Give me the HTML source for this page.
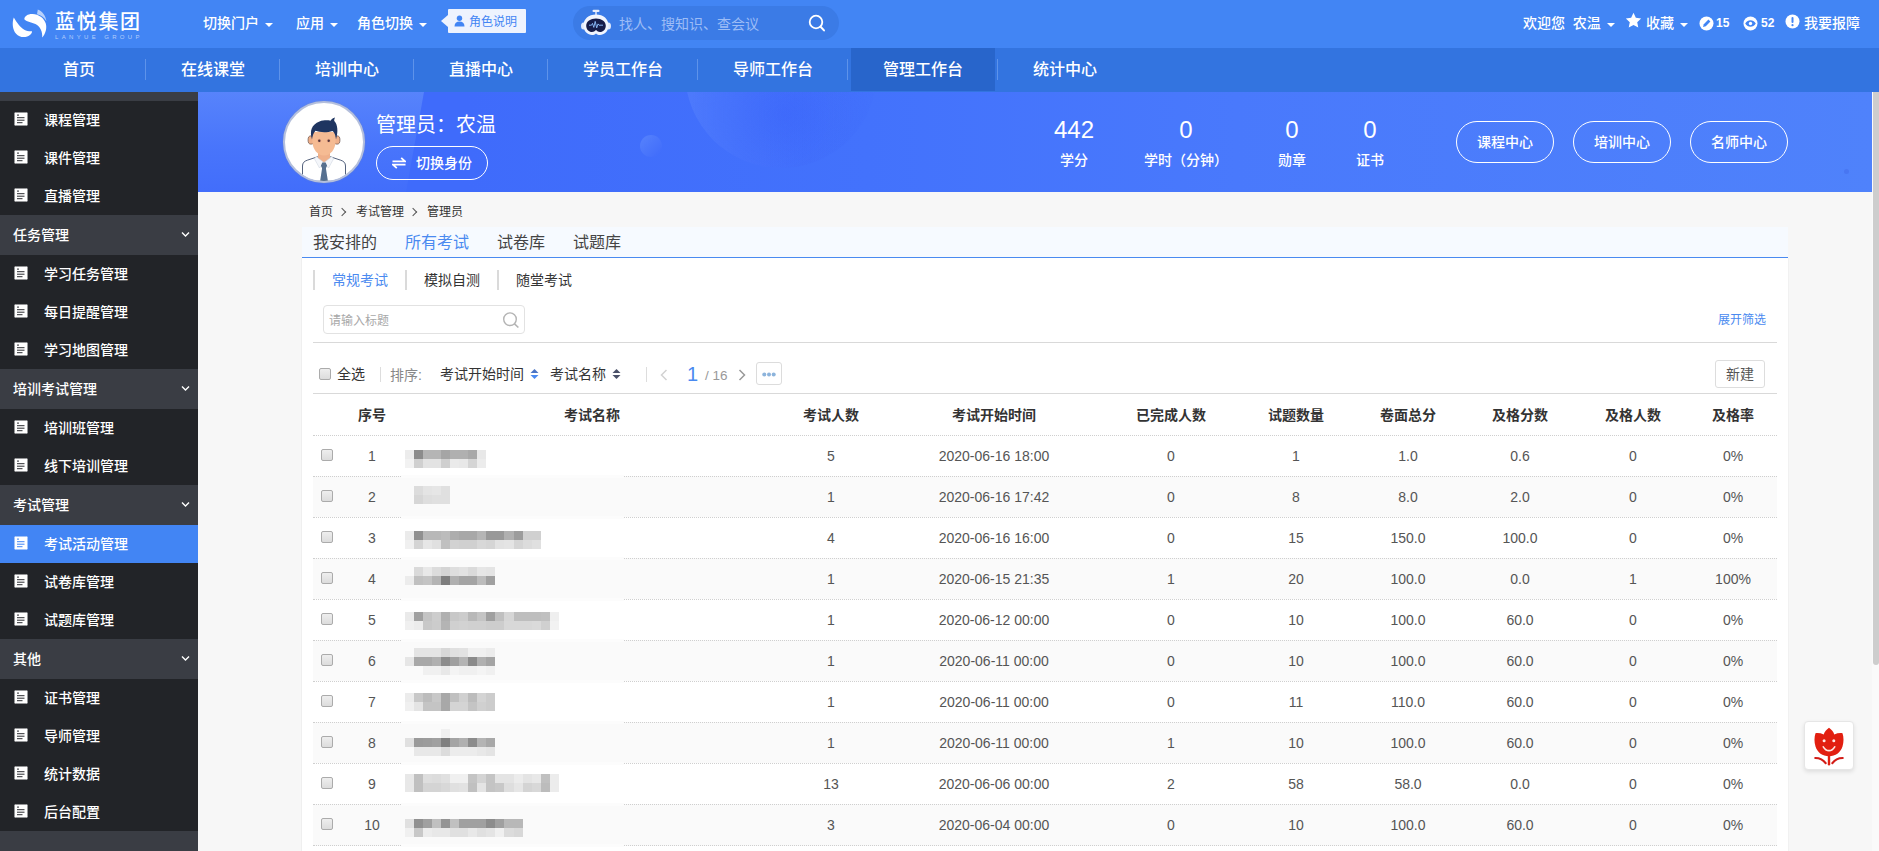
<!DOCTYPE html>
<html lang="zh-CN">
<head>
<meta charset="utf-8">
<title>考试活动管理</title>
<style>
*{box-sizing:border-box;margin:0;padding:0}
html,body{width:1879px;height:851px;overflow:hidden;background:#f7f7f7}
body{font-family:"Liberation Sans","Noto Sans CJK SC",sans-serif;font-size:14px;color:#333;position:relative}
a{text-decoration:none;color:inherit}
.abs{position:absolute}
/* ---------- top bar ---------- */
#top{position:absolute;left:0;top:0;width:1879px;height:48px;background:#4285f4;color:#fff}
#top .t{position:absolute;top:0;height:47px;line-height:47px;font-size:14px;font-weight:500;white-space:nowrap;color:#fff}
.caret{display:inline-block;width:0;height:0;border-left:4px solid transparent;border-right:4px solid transparent;border-top:4px solid #fff;vertical-align:middle;margin-left:6px;margin-top:2px}
/* ---------- nav ---------- */
#nav{position:absolute;left:0;top:48px;width:1879px;height:44px;background:#3374e0;color:#fff}
#nav .n{position:absolute;top:0;height:44px;line-height:44px;font-size:16px;font-weight:500;text-align:center;white-space:nowrap}
#nav .sep{position:absolute;top:11px;width:1px;height:21px;background:#5e93ea}
#nav .act{background:#2865cb}
/* ---------- sidebar ---------- */
#side{position:absolute;left:0;top:92px;width:198px;height:759px;background:#3a3d44;color:#fff;font-weight:500}
#side .it{position:absolute;left:0;width:198px;height:38px;line-height:38px;background:#222428;font-size:14px;padding-left:44px;white-space:nowrap}
#side .gp{position:absolute;left:0;width:198px;height:40px;line-height:40px;background:#3a3d44;font-size:14px;padding-left:13px;white-space:nowrap}
#side .it.on{background:#4285f4}
#side .ic{position:absolute;left:14px;top:11px;width:14px;height:14px;stroke:#2a2c31}
#side .on .ic{stroke:#4285f4}
#side .ch{position:absolute;left:181px;top:16px;width:9px;height:7px}
/* ---------- banner ---------- */
#ban{position:absolute;left:198px;top:92px;width:1674px;height:100px;background:#406cfb;overflow:hidden;color:#fff}
/* ---------- scrollbar ---------- */
#sbt{position:absolute;left:1872px;top:92px;width:7px;height:759px;background:#fafafa}
#sbh{position:absolute;left:1873px;top:92px;width:6px;height:573px;background:#cdcdcd;border-radius:0 0 3px 3px}
/* ---------- content ---------- */
#crumb{position:absolute;left:309px;top:204px;height:16px;line-height:16px;font-size:12px;color:#333;white-space:nowrap}
#tabs{position:absolute;left:302px;top:227px;width:1486px;height:31px;background:#f6faff;border-bottom:1px solid #4a8af0}
#tabs span{position:absolute;top:0;height:30px;line-height:31px;font-size:16px;color:#444;white-space:nowrap}
#panel{position:absolute;left:302px;top:258px;width:1486px;height:593px;background:#fff;box-shadow:-1px 0 0 #efefef,1px 0 0 #f1f1f1}
.st{position:absolute;top:0;height:100px;text-align:center;color:#fff;white-space:nowrap}
.st b{position:absolute;left:0;right:0;top:22px;height:32px;line-height:32px;font-size:24px;font-weight:400}
.st span{position:absolute;left:0;right:0;top:58px;height:20px;line-height:20px;font-size:14px;font-weight:500}
.pill{position:absolute;top:29px;width:98px;height:42px;line-height:40px;border:1px solid #fff;border-radius:21px;text-align:center;font-size:14px;font-weight:500;color:#fff;white-space:nowrap}
.gt{display:inline-block;width:6px;height:6px;border-top:1px solid #555;border-right:1px solid #555;transform:rotate(45deg);margin:0 11px 1px 6px}
.sub{position:absolute;top:12px;height:20px;line-height:20px;border-left:2px solid #dadada;padding-left:17px;font-size:14px;color:#333;white-space:nowrap}
.tx{height:24px;line-height:24px;font-size:14px;white-space:nowrap}
.cb{position:absolute;width:12px;height:12px;border:1px solid #ababab;border-radius:2px;background:linear-gradient(#eee,#dcdcdc)}
.th{position:absolute;top:145px;width:140px;height:24px;line-height:24px;text-align:center;font-size:14px;font-weight:700;color:#333;white-space:nowrap}
.tr{position:absolute;left:11px;width:1464px;height:42px;border-top:1px dotted #cfcfcf;border-bottom:1px dotted #cfcfcf}
.td{position:absolute;top:8px;width:140px;height:24px;line-height:24px;text-align:center;font-size:14px;color:#555;white-space:nowrap}
</style>
</head>
<body>
<div id="top">
<svg class="abs" style="left:10px;top:8px" width="40" height="32" viewBox="10 8 40 32">
<path d="M37.800 9.600c4.600 1.900 7.900 6.200 8.600 11.600-2-3.600-5-6-9.400-7z" fill="#d4e3fd" opacity=".8"/>
<path d="M24.300 19.200c.3-3.200 3.700-5.400 8.200-5.200 6.300.3 11.500 4 13.200 9.300 1.400 4.600.2 10-3.500 14.300.5-6.200-2-11-6.800-13.600-3.600-2-8.300-1.800-11.100-4.800z" fill="#fff"/>
<path d="M13.800 17.400c-1.900 5.400-1.300 12.200 2.300 16.300 3.600 4.100 10 4.700 14.400.8 1-.9 1.500-2 1.500-3.200-5 .4-9.800-2-13.300-6.600-1.800-2.400-3.500-4.900-4.900-7.300z" fill="#fff"/>
</svg>
<div class="abs" style="left:55px;top:8px;height:28px;line-height:28px;font-size:20px;letter-spacing:1.700px;font-weight:500;color:#fff;white-space:nowrap">蓝悦集团</div>
<div class="abs" style="left:55px;top:33px;height:8px;line-height:8px;font-size:6px;letter-spacing:3.350px;color:#b4cdfb;white-space:nowrap">LANYUE GROUP</div>
<div class="t" style="left:203px">切换门户<i class="caret"></i></div>
<div class="t" style="left:296px">应用<i class="caret"></i></div>
<div class="t" style="left:357px">角色切换<i class="caret"></i></div>
<div class="abs" style="left:441px;top:15px;width:0;height:0;border-top:6px solid transparent;border-bottom:6px solid transparent;border-right:7px solid #eef3fe"></div>
<div class="abs" style="left:448px;top:9px;width:78px;height:24px;background:#eef3fe;border-radius:1px"></div>
<svg class="abs" style="left:454px;top:15px" width="11" height="12" viewBox="0 0 11 12"><circle cx="5.500" cy="3.200" r="2.700" fill="#4285f4"/><path d="M0.500 11.500c0-3.200 2-5 5-5s5 1.800 5 5z" fill="#4285f4"/></svg>
<div class="abs" style="left:469px;top:10px;height:24px;line-height:24px;font-size:12px;color:#4285f4;white-space:nowrap">角色说明</div>
<div class="abs" style="left:573px;top:6px;width:266px;height:34px;border-radius:17px;background:#3b7be6"></div>
<svg class="abs" style="left:580px;top:9px" width="32" height="28" viewBox="0 0 32 28">
<rect x="12.500" y=".8" width="7" height="2.200" rx="1.100" fill="#e8eefc"/><rect x="15.300" y="2" width="1.400" height="4" fill="#e8eefc"/>
<ellipse cx="3.600" cy="17" rx="2.600" ry="3.600" fill="#dfe8fc"/><ellipse cx="28.400" cy="17" rx="2.600" ry="3.600" fill="#dfe8fc"/>
<path d="M16 5.500c7.500 0 12.500 4.500 12.500 11 0 6-4.500 9.500-8.500 9.500-1.500 0-2.800-.6-4-1.600-1.200 1-2.500 1.600-4 1.600-4 0-8.500-3.500-8.500-9.500 0-6.500 5-11 12.500-11z" fill="#f1f5fe"/>
<path d="M16 9.500c5.500 0 9.800 3 9.800 7.200 0 3.800-2.800 6.300-5.800 6.300-1.600 0-2.800-.8-4-2-1.200 1.200-2.400 2-4 2-3 0-5.800-2.500-5.800-6.300 0-4.200 4.300-7.200 9.800-7.200z" fill="#161c4a"/>
<path d="M9 16.200h2.500l1-1.800 1.300 4 1.400-6 1.500 6.500 1.300-4 1 1.300H23" fill="none" stroke="#8fc0ff" stroke-width=".9"/>
</svg>
<div class="abs" style="left:619px;top:6px;height:36px;line-height:36px;font-size:14px;color:#9dbdf6;white-space:nowrap">找人、搜知识、查会议</div>
<svg class="abs" style="left:807px;top:13px" width="20" height="20" viewBox="0 0 20 20"><circle cx="9" cy="9" r="6.300" fill="none" stroke="#fff" stroke-width="1.800"/><path d="M13.600 13.800l3.400 3.600" stroke="#fff" stroke-width="2" stroke-linecap="round"/></svg>
<div class="t" style="left:1523px">欢迎您&nbsp; 农温<i class="caret"></i></div>
<svg class="abs" style="left:1625px;top:12px" width="17" height="17" viewBox="0 0 16 16"><path d="M8 .8l2.200 4.700 5 .6-3.700 3.500 1 5.100L8 12.200l-4.500 2.500 1-5.100L.8 6.100l5-.6z" fill="#fff"/></svg>
<div class="t" style="left:1646px">收藏<i class="caret"></i></div>
<svg class="abs" style="left:1699px;top:16px" width="15" height="15" viewBox="0 0 15 15"><circle cx="7.500" cy="7.500" r="7" fill="#fff"/><path d="M4 11l.8-2.800 4.600-4.600 2 2-4.600 4.600z" fill="#4285f4"/></svg>
<div class="t" style="left:1716px;font-size:12px;font-weight:700">15</div>
<svg class="abs" style="left:1743px;top:16px" width="15" height="15" viewBox="0 0 15 15"><circle cx="7.500" cy="7.500" r="7" fill="#fff"/><path d="M2.200 7.500c1.500-2.300 3.200-3.300 5.300-3.300s3.800 1 5.300 3.300c-1.500 2.300-3.200 3.300-5.300 3.300s-3.800-1-5.300-3.300z" fill="#4285f4"/><circle cx="7.500" cy="7.500" r="1.700" fill="#fff"/></svg>
<div class="t" style="left:1761px;font-size:12px;font-weight:700">52</div>
<svg class="abs" style="left:1785px;top:14px" width="15" height="15" viewBox="0 0 15 15"><circle cx="7.500" cy="7.500" r="7" fill="#fff"/><rect x="6.500" y="3" width="2" height="6" rx="1" fill="#4285f4"/><circle cx="7.500" cy="11.200" r="1.100" fill="#4285f4"/></svg>
<div class="t" style="left:1804px;font-size:14px">我要报障</div>
</div>
<div id="nav">
<div class="n" style="left:12px;width:134px">首页</div>
<div class="n" style="left:146px;width:134px">在线课堂</div>
<div class="n" style="left:280px;width:134px">培训中心</div>
<div class="n" style="left:414px;width:134px">直播中心</div>
<div class="n" style="left:548px;width:150px">学员工作台</div>
<div class="n" style="left:698px;width:150px">导师工作台</div>
<div class="abs act" style="left:851px;top:0;width:144px;height:43px"></div>
<div class="n" style="left:848px;width:150px">管理工作台</div>
<div class="n" style="left:998px;width:134px">统计中心</div>
<div class="sep" style="left:145px"></div>
<div class="sep" style="left:279px"></div>
<div class="sep" style="left:413px"></div>
<div class="sep" style="left:547px"></div>
<div class="sep" style="left:697px"></div>
<div class="sep" style="left:847px"></div>
<div class="sep" style="left:997px"></div>
</div>
<div id="side">
<div class="it" style="top:9px"><svg class="ic" viewBox="0 0 14 14"><rect width="14" height="14" rx="1.200" fill="#fff"/><path d="M3 3.100h2M3 5.700h7.500M3 8.200h7.500M3 10.700h5.500" stroke-width="1"/></svg>课程管理</div>
<div class="it" style="top:47px"><svg class="ic" viewBox="0 0 14 14"><rect width="14" height="14" rx="1.200" fill="#fff"/><path d="M3 3.100h2M3 5.700h7.500M3 8.200h7.500M3 10.700h5.500" stroke-width="1"/></svg>课件管理</div>
<div class="it" style="top:85px"><svg class="ic" viewBox="0 0 14 14"><rect width="14" height="14" rx="1.200" fill="#fff"/><path d="M3 3.100h2M3 5.700h7.500M3 8.200h7.500M3 10.700h5.500" stroke-width="1"/></svg>直播管理</div>
<div class="gp" style="top:123px">任务管理<svg class="ch" viewBox="0 0 9 7"><path d="M1 1.500l3.500 3.500 3.500-3.500" fill="none" stroke="#fff" stroke-width="1.400"/></svg></div>
<div class="it" style="top:163px"><svg class="ic" viewBox="0 0 14 14"><rect width="14" height="14" rx="1.200" fill="#fff"/><path d="M3 3.100h2M3 5.700h7.500M3 8.200h7.500M3 10.700h5.500" stroke-width="1"/></svg>学习任务管理</div>
<div class="it" style="top:201px"><svg class="ic" viewBox="0 0 14 14"><rect width="14" height="14" rx="1.200" fill="#fff"/><path d="M3 3.100h2M3 5.700h7.500M3 8.200h7.500M3 10.700h5.500" stroke-width="1"/></svg>每日提醒管理</div>
<div class="it" style="top:239px"><svg class="ic" viewBox="0 0 14 14"><rect width="14" height="14" rx="1.200" fill="#fff"/><path d="M3 3.100h2M3 5.700h7.500M3 8.200h7.500M3 10.700h5.500" stroke-width="1"/></svg>学习地图管理</div>
<div class="gp" style="top:277px">培训考试管理<svg class="ch" viewBox="0 0 9 7"><path d="M1 1.500l3.500 3.500 3.500-3.500" fill="none" stroke="#fff" stroke-width="1.400"/></svg></div>
<div class="it" style="top:317px"><svg class="ic" viewBox="0 0 14 14"><rect width="14" height="14" rx="1.200" fill="#fff"/><path d="M3 3.100h2M3 5.700h7.500M3 8.200h7.500M3 10.700h5.500" stroke-width="1"/></svg>培训班管理</div>
<div class="it" style="top:355px"><svg class="ic" viewBox="0 0 14 14"><rect width="14" height="14" rx="1.200" fill="#fff"/><path d="M3 3.100h2M3 5.700h7.500M3 8.200h7.500M3 10.700h5.500" stroke-width="1"/></svg>线下培训管理</div>
<div class="gp" style="top:393px">考试管理<svg class="ch" viewBox="0 0 9 7"><path d="M1 1.500l3.500 3.500 3.500-3.500" fill="none" stroke="#fff" stroke-width="1.400"/></svg></div>
<div class="it on" style="top:433px"><svg class="ic" viewBox="0 0 14 14"><rect width="14" height="14" rx="1.200" fill="#fff"/><path d="M3 3.100h2M3 5.700h7.500M3 8.200h7.500M3 10.700h5.500" stroke-width="1"/></svg>考试活动管理</div>
<div class="it" style="top:471px"><svg class="ic" viewBox="0 0 14 14"><rect width="14" height="14" rx="1.200" fill="#fff"/><path d="M3 3.100h2M3 5.700h7.500M3 8.200h7.500M3 10.700h5.500" stroke-width="1"/></svg>试卷库管理</div>
<div class="it" style="top:509px"><svg class="ic" viewBox="0 0 14 14"><rect width="14" height="14" rx="1.200" fill="#fff"/><path d="M3 3.100h2M3 5.700h7.500M3 8.200h7.500M3 10.700h5.500" stroke-width="1"/></svg>试题库管理</div>
<div class="gp" style="top:547px">其他<svg class="ch" viewBox="0 0 9 7"><path d="M1 1.500l3.500 3.500 3.500-3.500" fill="none" stroke="#fff" stroke-width="1.400"/></svg></div>
<div class="it" style="top:587px"><svg class="ic" viewBox="0 0 14 14"><rect width="14" height="14" rx="1.200" fill="#fff"/><path d="M3 3.100h2M3 5.700h7.500M3 8.200h7.500M3 10.700h5.500" stroke-width="1"/></svg>证书管理</div>
<div class="it" style="top:625px"><svg class="ic" viewBox="0 0 14 14"><rect width="14" height="14" rx="1.200" fill="#fff"/><path d="M3 3.100h2M3 5.700h7.500M3 8.200h7.500M3 10.700h5.500" stroke-width="1"/></svg>导师管理</div>
<div class="it" style="top:663px"><svg class="ic" viewBox="0 0 14 14"><rect width="14" height="14" rx="1.200" fill="#fff"/><path d="M3 3.100h2M3 5.700h7.500M3 8.200h7.500M3 10.700h5.500" stroke-width="1"/></svg>统计数据</div>
<div class="it" style="top:701px"><svg class="ic" viewBox="0 0 14 14"><rect width="14" height="14" rx="1.200" fill="#fff"/><path d="M3 3.100h2M3 5.700h7.500M3 8.200h7.500M3 10.700h5.500" stroke-width="1"/></svg>后台配置</div>
</div>
<div id="ban">
<div class="abs" style="left:0;top:0;width:1674px;height:100px;background:linear-gradient(90deg,#3f6bfb 0,#3f6bfb 16%,#4372fc 40%,#4979fc 62%,#4f82fb 100%)"></div>
<div class="abs" style="left:0;top:0;width:226px;height:100px;background:linear-gradient(180deg,rgba(120,165,252,.42) 0,rgba(100,145,252,.26) 55%,rgba(90,130,250,.10) 100%);clip-path:polygon(0 0,226px 0,208px 100px,0 100px)"></div>
<div class="abs" style="left:487px;top:-116px;width:192px;height:192px;border-radius:50%;background:radial-gradient(circle at 52% 72%,rgba(56,96,250,.45) 0,rgba(60,100,250,.22) 28%,rgba(70,110,250,0) 55%),linear-gradient(90deg,rgba(120,160,255,.22) 0,rgba(110,150,255,.13) 30%,rgba(90,130,252,.04) 62%,rgba(80,120,250,0) 85%)"></div>
<div class="abs" style="left:442px;top:43px;width:22px;height:22px;border-radius:50%;background:linear-gradient(135deg,#5480fc 10%,#426efb 85%)"></div>
<div class="abs" style="left:85px;top:9px;width:82px;height:82px;border-radius:50%;background:#fff;border:2px solid #b4bfdc;overflow:hidden;box-shadow:0 0 2px rgba(120,140,190,.6)">
<svg width="78" height="78" viewBox="0 0 78 78" style="position:absolute;left:0;top:0">
<path d="M17.500 78V63c0-3.200 1.800-4.800 4.800-5.800l10.200-3.400h13l10.200 3.400c3 1 4.800 2.600 4.800 5.800V78z" fill="#fff" stroke="#41506e" stroke-width=".9"/>
<path d="M33 48h12v9l-6 5-6-5z" fill="#efb08a"/>
<path d="M31 53.500l8 6-4.500 5.500-5-9zM47 53.500l-8 6 4.500 5.500 5-9z" fill="#f4f6fa" stroke="#c9d0dd" stroke-width=".5"/>
<path d="M37.300 59.500h3.400l1.400 3.200-1.200 2.600 2 12.700h-7.800l2-12.700-1.200-2.600z" fill="#56708f"/>
<ellipse cx="26" cy="37" rx="3" ry="4.200" fill="#efb08a" stroke="#3a2a2a" stroke-width=".5"/><ellipse cx="52" cy="37" rx="3" ry="4.200" fill="#efb08a" stroke="#3a2a2a" stroke-width=".5"/>
<path d="M27.500 30c0-2 23-2 23 0v9c0 7-5 13.500-11.500 13.500S27.500 46 27.500 39z" fill="#f5bb93"/>
<path d="M27 36.500c-2.600-8.500-.5-15 7.500-18 4-1.500 8.500-1.300 11-.8.800-1.300 2.400-2.800 4.600-3.300-.8 1.300-1 2.500-.8 3.600 3.500 3.800 4 10.500 1.700 18.500-.4-4.500-1.500-7-3.500-8.500-5.500 1.800-12.500 1.500-17-.2-2 2-3 5-3.500 8.700z" fill="#1f3560"/>
<circle cx="34.300" cy="37.800" r="1.200" fill="#2a1d2a"/><circle cx="43.700" cy="37.800" r="1.200" fill="#2a1d2a"/>
<circle cx="34.300" cy="37.800" r="2" fill="#d97b6a" opacity=".25"/><circle cx="43.700" cy="37.800" r="2" fill="#d97b6a" opacity=".25"/>
</svg></div>
<div class="abs" style="left:178px;top:18px;height:30px;line-height:30px;font-size:20px;font-weight:400;color:#fff;white-space:nowrap">管理员：农温</div>
<div class="abs" style="left:178px;top:54px;width:112px;height:34px;border:1px solid #fff;border-radius:17px"></div>
<svg class="abs" style="left:194px;top:65px" width="14" height="12" viewBox="0 0 14 12"><path d="M.5 4.300h12.500L9.200 .8M13.500 7.700H1L4.800 11.200" fill="none" stroke="#fff" stroke-width="1.800"/></svg>
<div class="abs" style="left:218px;top:54px;height:34px;line-height:34px;font-size:14px;font-weight:500;color:#fff;white-space:nowrap">切换身份</div>
<div class="st" style="left:826px;width:100px"><b>442</b><span>学分</span></div>
<div class="st" style="left:928px;width:120px"><b>0</b><span>学时（分钟）</span></div>
<div class="st" style="left:1044px;width:100px"><b>0</b><span>勋章</span></div>
<div class="st" style="left:1122px;width:100px"><b>0</b><span>证书</span></div>
<div class="pill" style="left:1258px">课程中心</div>
<div class="pill" style="left:1375px">培训中心</div>
<div class="pill" style="left:1492px">名师中心</div>
<div class="abs" style="left:1646px;top:77px;width:5px;height:5px;border-radius:50%;background:#4876f2"></div>
</div>
<div id="sbt"></div><div id="sbh"></div>
<div id="crumb">首页<i class="gt"></i>考试管理<i class="gt"></i>管理员</div>
<div id="tabs"><span style="left:11px">我安排的</span><span style="left:103px;color:#4a8af0">所有考试</span><span style="left:195px">试卷库</span><span style="left:271px">试题库</span></div>
<div id="panel">
<div class="sub" style="left:11px;color:#4a8af0">常规考试</div><div class="sub" style="left:103px">模拟自测</div><div class="sub" style="left:195px">随堂考试</div>
<div class="abs" style="left:21px;top:47px;width:202px;height:29px;border:1px solid #e2e2e2;border-radius:4px;background:#fff"></div>
<div class="abs" style="left:27px;top:48px;height:28px;line-height:30px;font-size:12px;color:#a8a8a8;white-space:nowrap">请输入标题</div>
<svg class="abs" style="left:199px;top:52px" width="20" height="20" viewBox="0 0 20 20"><circle cx="9" cy="9.200" r="6.300" fill="none" stroke="#b4b4b4" stroke-width="1.400"/><path d="M13.500 13.800l3.900 3.700" stroke="#b4b4b4" stroke-width="1.600"/></svg>
<div class="abs" style="left:1416px;top:53px;height:18px;line-height:18px;font-size:12px;color:#4a8af0;white-space:nowrap">展开筛选</div>
<div class="abs" style="left:11px;top:84px;width:1464px;height:1px;background:#d9d9d9"></div>
<div class="cb" style="left:17px;top:110px"></div>
<div class="abs tx" style="left:35px;top:104px;color:#333">全选</div>
<div class="abs" style="left:78px;top:109px;width:1px;height:15px;background:#ddd"></div>
<div class="abs tx" style="left:88px;top:105px;color:#888">排序:</div>
<div class="abs tx" style="left:138px;top:104px;color:#333">考试开始时间</div>
<svg class="abs" style="left:228px;top:111px" width="9" height="10" viewBox="0 0 9 10"><path d="M4.500 0L8.500 4H.5z" fill="#4a74c4"/><path d="M4.500 10L8.500 6H.5z" fill="#4a8af0"/></svg>
<div class="abs tx" style="left:248px;top:104px;color:#333">考试名称</div>
<svg class="abs" style="left:310px;top:111px" width="9" height="10" viewBox="0 0 9 10"><path d="M4.500 0L8.500 4H.5zM4.500 10L8.500 6H.5z" fill="#4a5068"/></svg>
<div class="abs" style="left:344px;top:109px;width:1px;height:15px;background:#ddd"></div>
<svg class="abs" style="left:358px;top:111px" width="8" height="12" viewBox="0 0 8 12"><path d="M6.500 1L1.500 6l5 5" fill="none" stroke="#d2d2d2" stroke-width="1.500"/></svg>
<div class="abs" style="left:385px;top:102px;height:28px;line-height:28px;font-size:20px;color:#4a8af0">1</div>
<div class="abs tx" style="left:403px;top:106px;color:#999;font-size:13.500px">/ 16</div>
<svg class="abs" style="left:436px;top:111px" width="8" height="12" viewBox="0 0 8 12"><path d="M1.500 1l5 5-5 5" fill="none" stroke="#999" stroke-width="1.500"/></svg>
<div class="abs" style="left:454px;top:104px;width:26px;height:23px;border:1px solid #dcdcdc;border-radius:3px;background:#fff"></div>
<svg class="abs" style="left:460px;top:114px" width="14" height="5" viewBox="0 0 14 5"><circle cx="2.300" cy="2.500" r="2" fill="#8db4dc"/><circle cx="7" cy="2.500" r="2" fill="#8db4dc"/><circle cx="11.700" cy="2.500" r="2" fill="#8db4dc"/></svg>
<div class="abs" style="left:1413px;top:102px;width:50px;height:28px;line-height:27px;border:1px solid #ddd;border-radius:3px;background:#fff;text-align:center;font-size:14px;color:#555">新建</div>
<div class="abs" style="left:11px;top:135px;width:1464px;height:1px;background:#d9d9d9"></div>
<div class="th" style="left:0px">序号</div><div class="th" style="left:220px">考试名称</div><div class="th" style="left:459px">考试人数</div><div class="th" style="left:622px">考试开始时间</div><div class="th" style="left:799px">已完成人数</div><div class="th" style="left:924px">试题数量</div><div class="th" style="left:1036px">卷面总分</div><div class="th" style="left:1148px">及格分数</div><div class="th" style="left:1261px">及格人数</div><div class="th" style="left:1361px">及格率</div>
<div class="tr" style="top:177px;background:#fff"><div class="cb" style="left:8px;top:13px"></div><div class="td" style="left:-11px">1</div><div class="td" style="left:448px">5</div><div class="td" style="left:611px">2020-06-16 18:00</div><div class="td" style="left:788px">0</div><div class="td" style="left:913px">1</div><div class="td" style="left:1025px">1.0</div><div class="td" style="left:1137px">0.6</div><div class="td" style="left:1250px">0</div><div class="td" style="left:1350px">0%</div></div>
<div class="tr" style="top:218px;background:#fafafa"><div class="cb" style="left:8px;top:13px"></div><div class="td" style="left:-11px">2</div><div class="td" style="left:448px">1</div><div class="td" style="left:611px">2020-06-16 17:42</div><div class="td" style="left:788px">0</div><div class="td" style="left:913px">8</div><div class="td" style="left:1025px">8.0</div><div class="td" style="left:1137px">2.0</div><div class="td" style="left:1250px">0</div><div class="td" style="left:1350px">0%</div></div>
<div class="tr" style="top:259px;background:#fff"><div class="cb" style="left:8px;top:13px"></div><div class="td" style="left:-11px">3</div><div class="td" style="left:448px">4</div><div class="td" style="left:611px">2020-06-16 16:00</div><div class="td" style="left:788px">0</div><div class="td" style="left:913px">15</div><div class="td" style="left:1025px">150.0</div><div class="td" style="left:1137px">100.0</div><div class="td" style="left:1250px">0</div><div class="td" style="left:1350px">0%</div></div>
<div class="tr" style="top:300px;background:#fafafa"><div class="cb" style="left:8px;top:13px"></div><div class="td" style="left:-11px">4</div><div class="td" style="left:448px">1</div><div class="td" style="left:611px">2020-06-15 21:35</div><div class="td" style="left:788px">1</div><div class="td" style="left:913px">20</div><div class="td" style="left:1025px">100.0</div><div class="td" style="left:1137px">0.0</div><div class="td" style="left:1250px">1</div><div class="td" style="left:1350px">100%</div></div>
<div class="tr" style="top:341px;background:#fff"><div class="cb" style="left:8px;top:13px"></div><div class="td" style="left:-11px">5</div><div class="td" style="left:448px">1</div><div class="td" style="left:611px">2020-06-12 00:00</div><div class="td" style="left:788px">0</div><div class="td" style="left:913px">10</div><div class="td" style="left:1025px">100.0</div><div class="td" style="left:1137px">60.0</div><div class="td" style="left:1250px">0</div><div class="td" style="left:1350px">0%</div></div>
<div class="tr" style="top:382px;background:#fafafa"><div class="cb" style="left:8px;top:13px"></div><div class="td" style="left:-11px">6</div><div class="td" style="left:448px">1</div><div class="td" style="left:611px">2020-06-11 00:00</div><div class="td" style="left:788px">0</div><div class="td" style="left:913px">10</div><div class="td" style="left:1025px">100.0</div><div class="td" style="left:1137px">60.0</div><div class="td" style="left:1250px">0</div><div class="td" style="left:1350px">0%</div></div>
<div class="tr" style="top:423px;background:#fff"><div class="cb" style="left:8px;top:13px"></div><div class="td" style="left:-11px">7</div><div class="td" style="left:448px">1</div><div class="td" style="left:611px">2020-06-11 00:00</div><div class="td" style="left:788px">0</div><div class="td" style="left:913px">11</div><div class="td" style="left:1025px">110.0</div><div class="td" style="left:1137px">60.0</div><div class="td" style="left:1250px">0</div><div class="td" style="left:1350px">0%</div></div>
<div class="tr" style="top:464px;background:#fafafa"><div class="cb" style="left:8px;top:13px"></div><div class="td" style="left:-11px">8</div><div class="td" style="left:448px">1</div><div class="td" style="left:611px">2020-06-11 00:00</div><div class="td" style="left:788px">1</div><div class="td" style="left:913px">10</div><div class="td" style="left:1025px">100.0</div><div class="td" style="left:1137px">60.0</div><div class="td" style="left:1250px">0</div><div class="td" style="left:1350px">0%</div></div>
<div class="tr" style="top:505px;background:#fff"><div class="cb" style="left:8px;top:13px"></div><div class="td" style="left:-11px">9</div><div class="td" style="left:448px">13</div><div class="td" style="left:611px">2020-06-06 00:00</div><div class="td" style="left:788px">2</div><div class="td" style="left:913px">58</div><div class="td" style="left:1025px">58.0</div><div class="td" style="left:1137px">0.0</div><div class="td" style="left:1250px">0</div><div class="td" style="left:1350px">0%</div></div>
<div class="tr" style="top:546px;background:#fafafa"><div class="cb" style="left:8px;top:13px"></div><div class="td" style="left:-11px">10</div><div class="td" style="left:448px">3</div><div class="td" style="left:611px">2020-06-04 00:00</div><div class="td" style="left:788px">0</div><div class="td" style="left:913px">10</div><div class="td" style="left:1025px">100.0</div><div class="td" style="left:1137px">60.0</div><div class="td" style="left:1250px">0</div><div class="td" style="left:1350px">0%</div></div>
</div>
<!--MOSAIC--><svg class="abs" style="left:401px;top:436px" width="223" height="415" viewBox="0 0 223 415" shape-rendering="crispEdges">
<rect x="0" y="39" width="223" height="3" fill="#fcfcfc"/>
<rect x="0" y="80" width="223" height="3" fill="#fcfcfc"/>
<rect x="0" y="121" width="223" height="3" fill="#fcfcfc"/>
<rect x="0" y="162" width="223" height="3" fill="#fcfcfc"/>
<rect x="0" y="203" width="223" height="3" fill="#fcfcfc"/>
<rect x="0" y="244" width="223" height="3" fill="#fcfcfc"/>
<rect x="0" y="285" width="223" height="3" fill="#fcfcfc"/>
<rect x="0" y="326" width="223" height="3" fill="#fcfcfc"/>
<rect x="0" y="367" width="223" height="3" fill="#fcfcfc"/>
<rect x="0" y="408" width="223" height="3" fill="#fcfcfc"/>
<rect x="3.90" y="13.90" width="9.05" height="9.05" fill="#ececec"/>
<rect x="12.95" y="13.90" width="9.05" height="9.05" fill="#8c8c8c"/>
<rect x="22.00" y="13.90" width="9.05" height="9.05" fill="#b5b5b5"/>
<rect x="31.05" y="13.90" width="9.05" height="9.05" fill="#b5b5b5"/>
<rect x="40.10" y="13.90" width="9.05" height="9.05" fill="#a5a5a5"/>
<rect x="49.15" y="13.90" width="9.05" height="9.05" fill="#b0b0b0"/>
<rect x="58.20" y="13.90" width="9.05" height="9.05" fill="#b0b0b0"/>
<rect x="67.25" y="13.90" width="9.05" height="9.05" fill="#a8a8a8"/>
<rect x="76.30" y="13.90" width="9.05" height="9.05" fill="#e8e8e8"/>
<rect x="3.90" y="23.00" width="9.05" height="9.05" fill="#f2f2f2"/>
<rect x="12.95" y="23.00" width="9.05" height="9.05" fill="#d0d0d0"/>
<rect x="22.00" y="23.00" width="9.05" height="9.05" fill="#e3e3e3"/>
<rect x="31.05" y="23.00" width="9.05" height="9.05" fill="#e3e3e3"/>
<rect x="40.10" y="23.00" width="9.05" height="9.05" fill="#cfcfcf"/>
<rect x="49.15" y="23.00" width="9.05" height="9.05" fill="#eaeaea"/>
<rect x="58.20" y="23.00" width="9.05" height="9.05" fill="#e8e8e8"/>
<rect x="67.25" y="23.00" width="9.05" height="9.05" fill="#d5d5d5"/>
<rect x="76.30" y="23.00" width="9.05" height="9.05" fill="#ececec"/>
<rect x="12.95" y="49.70" width="9.05" height="9.05" fill="#dcdcdc"/>
<rect x="22.00" y="49.70" width="9.05" height="9.05" fill="#e4e4e4"/>
<rect x="31.05" y="49.70" width="9.05" height="9.05" fill="#e6e6e6"/>
<rect x="40.10" y="49.70" width="9.05" height="9.05" fill="#e0e0e0"/>
<rect x="12.95" y="58.80" width="9.05" height="9.05" fill="#d6d6d6"/>
<rect x="22.00" y="58.80" width="9.05" height="9.05" fill="#dedede"/>
<rect x="31.05" y="58.80" width="9.05" height="9.05" fill="#e0e0e0"/>
<rect x="40.10" y="58.80" width="9.05" height="9.05" fill="#e0e0e0"/>
<rect x="3.90" y="94.90" width="9.05" height="9.05" fill="#ebebeb"/>
<rect x="12.95" y="94.90" width="9.05" height="9.05" fill="#909090"/>
<rect x="22.00" y="94.90" width="9.05" height="9.05" fill="#b8b8b8"/>
<rect x="31.05" y="94.90" width="9.05" height="9.05" fill="#b8b8b8"/>
<rect x="40.10" y="94.90" width="9.05" height="9.05" fill="#bcbcbc"/>
<rect x="49.15" y="94.90" width="9.05" height="9.05" fill="#adadad"/>
<rect x="58.20" y="94.90" width="9.05" height="9.05" fill="#a8a8a8"/>
<rect x="67.25" y="94.90" width="9.05" height="9.05" fill="#a8a8a8"/>
<rect x="76.30" y="94.90" width="9.05" height="9.05" fill="#b5b5b5"/>
<rect x="85.35" y="94.90" width="9.05" height="9.05" fill="#999999"/>
<rect x="94.40" y="94.90" width="9.05" height="9.05" fill="#999999"/>
<rect x="103.45" y="94.90" width="9.05" height="9.05" fill="#b0b0b0"/>
<rect x="112.50" y="94.90" width="9.05" height="9.05" fill="#9c9c9c"/>
<rect x="121.55" y="94.90" width="9.05" height="9.05" fill="#d0d0d0"/>
<rect x="130.60" y="94.90" width="9.05" height="9.05" fill="#d0d0d0"/>
<rect x="3.90" y="104.00" width="9.05" height="9.05" fill="#f0f0f0"/>
<rect x="12.95" y="104.00" width="9.05" height="9.05" fill="#d4d4d4"/>
<rect x="22.00" y="104.00" width="9.05" height="9.05" fill="#e6e6e6"/>
<rect x="31.05" y="104.00" width="9.05" height="9.05" fill="#e0e0e0"/>
<rect x="40.10" y="104.00" width="9.05" height="9.05" fill="#c0c0c0"/>
<rect x="49.15" y="104.00" width="9.05" height="9.05" fill="#d2d2d2"/>
<rect x="58.20" y="104.00" width="9.05" height="9.05" fill="#d0d0d0"/>
<rect x="67.25" y="104.00" width="9.05" height="9.05" fill="#d0d0d0"/>
<rect x="76.30" y="104.00" width="9.05" height="9.05" fill="#d8d8d8"/>
<rect x="85.35" y="104.00" width="9.05" height="9.05" fill="#d5d5d5"/>
<rect x="94.40" y="104.00" width="9.05" height="9.05" fill="#e2e2e2"/>
<rect x="103.45" y="104.00" width="9.05" height="9.05" fill="#e4e4e4"/>
<rect x="112.50" y="104.00" width="9.05" height="9.05" fill="#d5d5d5"/>
<rect x="121.55" y="104.00" width="9.05" height="9.05" fill="#dcdcdc"/>
<rect x="130.60" y="104.00" width="9.05" height="9.05" fill="#e0e0e0"/>
<rect x="12.95" y="131.10" width="9.05" height="9.05" fill="#dadada"/>
<rect x="22.00" y="131.10" width="9.05" height="9.05" fill="#e8e8e8"/>
<rect x="31.05" y="131.10" width="9.05" height="9.05" fill="#dcdcdc"/>
<rect x="40.10" y="131.10" width="9.05" height="9.05" fill="#d4d4d4"/>
<rect x="49.15" y="131.10" width="9.05" height="9.05" fill="#dedede"/>
<rect x="58.20" y="131.10" width="9.05" height="9.05" fill="#e2e2e2"/>
<rect x="67.25" y="131.10" width="9.05" height="9.05" fill="#dadada"/>
<rect x="76.30" y="131.10" width="9.05" height="9.05" fill="#e6e6e6"/>
<rect x="85.35" y="131.10" width="9.05" height="9.05" fill="#e4e4e4"/>
<rect x="3.90" y="140.10" width="9.05" height="9.05" fill="#ececec"/>
<rect x="12.95" y="140.10" width="9.05" height="9.05" fill="#c0c0c0"/>
<rect x="22.00" y="140.10" width="9.05" height="9.05" fill="#c4c4c4"/>
<rect x="31.05" y="140.10" width="9.05" height="9.05" fill="#b4b4b4"/>
<rect x="40.10" y="140.10" width="9.05" height="9.05" fill="#7e7e7e"/>
<rect x="49.15" y="140.10" width="9.05" height="9.05" fill="#b0b0b0"/>
<rect x="58.20" y="140.10" width="9.05" height="9.05" fill="#a4a4a4"/>
<rect x="67.25" y="140.10" width="9.05" height="9.05" fill="#a4a4a4"/>
<rect x="76.30" y="140.10" width="9.05" height="9.05" fill="#bcbcbc"/>
<rect x="85.35" y="140.10" width="9.05" height="9.05" fill="#a0a0a0"/>
<rect x="3.90" y="176.30" width="9.05" height="9.05" fill="#eaeaea"/>
<rect x="12.95" y="176.30" width="9.05" height="9.05" fill="#a0a0a0"/>
<rect x="22.00" y="176.30" width="9.05" height="9.05" fill="#c4c4c4"/>
<rect x="31.05" y="176.30" width="9.05" height="9.05" fill="#cdcdcd"/>
<rect x="40.10" y="176.30" width="9.05" height="9.05" fill="#b0b0b0"/>
<rect x="49.15" y="176.30" width="9.05" height="9.05" fill="#c8c8c8"/>
<rect x="58.20" y="176.30" width="9.05" height="9.05" fill="#cccccc"/>
<rect x="67.25" y="176.30" width="9.05" height="9.05" fill="#b8b8b8"/>
<rect x="76.30" y="176.30" width="9.05" height="9.05" fill="#c4c4c4"/>
<rect x="85.35" y="176.30" width="9.05" height="9.05" fill="#a0a0a0"/>
<rect x="94.40" y="176.30" width="9.05" height="9.05" fill="#c0c0c0"/>
<rect x="103.45" y="176.30" width="9.05" height="9.05" fill="#d6d6d6"/>
<rect x="112.50" y="176.30" width="9.05" height="9.05" fill="#bebebe"/>
<rect x="121.55" y="176.30" width="9.05" height="9.05" fill="#bebebe"/>
<rect x="130.60" y="176.30" width="9.05" height="9.05" fill="#bebebe"/>
<rect x="139.65" y="176.30" width="9.05" height="9.05" fill="#c0c0c0"/>
<rect x="148.70" y="176.30" width="9.05" height="9.05" fill="#efefef"/>
<rect x="3.90" y="185.30" width="9.05" height="9.05" fill="#f0f0f0"/>
<rect x="12.95" y="185.30" width="9.05" height="9.05" fill="#ececec"/>
<rect x="22.00" y="185.30" width="9.05" height="9.05" fill="#c8c8c8"/>
<rect x="31.05" y="185.30" width="9.05" height="9.05" fill="#cccccc"/>
<rect x="40.10" y="185.30" width="9.05" height="9.05" fill="#b4b4b4"/>
<rect x="49.15" y="185.30" width="9.05" height="9.05" fill="#d0d0d0"/>
<rect x="58.20" y="185.30" width="9.05" height="9.05" fill="#d2d2d2"/>
<rect x="67.25" y="185.30" width="9.05" height="9.05" fill="#d0d0d0"/>
<rect x="76.30" y="185.30" width="9.05" height="9.05" fill="#d0d0d0"/>
<rect x="85.35" y="185.30" width="9.05" height="9.05" fill="#cdcdcd"/>
<rect x="94.40" y="185.30" width="9.05" height="9.05" fill="#cdcdcd"/>
<rect x="103.45" y="185.30" width="9.05" height="9.05" fill="#d8d8d8"/>
<rect x="112.50" y="185.30" width="9.05" height="9.05" fill="#d8d8d8"/>
<rect x="121.55" y="185.30" width="9.05" height="9.05" fill="#d8d8d8"/>
<rect x="130.60" y="185.30" width="9.05" height="9.05" fill="#dadada"/>
<rect x="139.65" y="185.30" width="9.05" height="9.05" fill="#d0d0d0"/>
<rect x="148.70" y="185.30" width="9.05" height="9.05" fill="#f2f2f2"/>
<rect x="12.95" y="212.20" width="9.05" height="9.05" fill="#e4e4e4"/>
<rect x="22.00" y="212.20" width="9.05" height="9.05" fill="#e4e4e4"/>
<rect x="31.05" y="212.20" width="9.05" height="9.05" fill="#e4e4e4"/>
<rect x="40.10" y="212.20" width="9.05" height="9.05" fill="#d8d8d8"/>
<rect x="49.15" y="212.20" width="9.05" height="9.05" fill="#e0e0e0"/>
<rect x="58.20" y="212.20" width="9.05" height="9.05" fill="#e2e2e2"/>
<rect x="67.25" y="212.20" width="9.05" height="9.05" fill="#f0f0f0"/>
<rect x="76.30" y="212.20" width="9.05" height="9.05" fill="#f0f0f0"/>
<rect x="85.35" y="212.20" width="9.05" height="9.05" fill="#ececec"/>
<rect x="3.90" y="221.00" width="9.05" height="9.05" fill="#e6e6e6"/>
<rect x="12.95" y="221.00" width="9.05" height="9.05" fill="#a8a8a8"/>
<rect x="22.00" y="221.00" width="9.05" height="9.05" fill="#a8a8a8"/>
<rect x="31.05" y="221.00" width="9.05" height="9.05" fill="#b0b0b0"/>
<rect x="40.10" y="221.00" width="9.05" height="9.05" fill="#8c8c8c"/>
<rect x="49.15" y="221.00" width="9.05" height="9.05" fill="#a0a0a0"/>
<rect x="58.20" y="221.00" width="9.05" height="9.05" fill="#b4b4b4"/>
<rect x="67.25" y="221.00" width="9.05" height="9.05" fill="#8a8a8a"/>
<rect x="76.30" y="221.00" width="9.05" height="9.05" fill="#b0b0b0"/>
<rect x="85.35" y="221.00" width="9.05" height="9.05" fill="#a4a4a4"/>
<rect x="22.00" y="230.00" width="9.05" height="9.05" fill="#f0f0f0"/>
<rect x="31.05" y="230.00" width="9.05" height="9.05" fill="#f0f0f0"/>
<rect x="40.10" y="230.00" width="9.05" height="9.05" fill="#e8e8e8"/>
<rect x="49.15" y="230.00" width="9.05" height="9.05" fill="#f4f4f4"/>
<rect x="58.20" y="230.00" width="9.05" height="9.05" fill="#f0f0f0"/>
<rect x="67.25" y="230.00" width="9.05" height="9.05" fill="#f0f0f0"/>
<rect x="76.30" y="230.00" width="9.05" height="9.05" fill="#f4f4f4"/>
<rect x="85.35" y="230.00" width="9.05" height="9.05" fill="#f0f0f0"/>
<rect x="3.90" y="257.10" width="9.05" height="9.05" fill="#ececec"/>
<rect x="12.95" y="257.10" width="9.05" height="9.05" fill="#c8c8c8"/>
<rect x="22.00" y="257.10" width="9.05" height="9.05" fill="#bcbcbc"/>
<rect x="31.05" y="257.10" width="9.05" height="9.05" fill="#c8c8c8"/>
<rect x="40.10" y="257.10" width="9.05" height="9.05" fill="#a8a8a8"/>
<rect x="49.15" y="257.10" width="9.05" height="9.05" fill="#c0c0c0"/>
<rect x="58.20" y="257.10" width="9.05" height="9.05" fill="#d0d0d0"/>
<rect x="67.25" y="257.10" width="9.05" height="9.05" fill="#bcbcbc"/>
<rect x="76.30" y="257.10" width="9.05" height="9.05" fill="#d4d4d4"/>
<rect x="85.35" y="257.10" width="9.05" height="9.05" fill="#cccccc"/>
<rect x="3.90" y="266.20" width="9.05" height="9.05" fill="#f0f0f0"/>
<rect x="12.95" y="266.20" width="9.05" height="9.05" fill="#e4e4e4"/>
<rect x="22.00" y="266.20" width="9.05" height="9.05" fill="#c4c4c4"/>
<rect x="31.05" y="266.20" width="9.05" height="9.05" fill="#c4c4c4"/>
<rect x="40.10" y="266.20" width="9.05" height="9.05" fill="#a8a8a8"/>
<rect x="49.15" y="266.20" width="9.05" height="9.05" fill="#d4d4d4"/>
<rect x="58.20" y="266.20" width="9.05" height="9.05" fill="#d4d4d4"/>
<rect x="67.25" y="266.20" width="9.05" height="9.05" fill="#c4c4c4"/>
<rect x="76.30" y="266.20" width="9.05" height="9.05" fill="#d0d0d0"/>
<rect x="85.35" y="266.20" width="9.05" height="9.05" fill="#cccccc"/>
<rect x="40.10" y="293.00" width="9.05" height="9.05" fill="#f0f0f0"/>
<rect x="3.90" y="302.00" width="9.05" height="9.05" fill="#e0e0e0"/>
<rect x="12.95" y="302.00" width="9.05" height="9.05" fill="#9a9a9a"/>
<rect x="22.00" y="302.00" width="9.05" height="9.05" fill="#9c9c9c"/>
<rect x="31.05" y="302.00" width="9.05" height="9.05" fill="#a0a0a0"/>
<rect x="40.10" y="302.00" width="9.05" height="9.05" fill="#808080"/>
<rect x="49.15" y="302.00" width="9.05" height="9.05" fill="#a4a4a4"/>
<rect x="58.20" y="302.00" width="9.05" height="9.05" fill="#b0b0b0"/>
<rect x="67.25" y="302.00" width="9.05" height="9.05" fill="#8c8c8c"/>
<rect x="76.30" y="302.00" width="9.05" height="9.05" fill="#b4b4b4"/>
<rect x="85.35" y="302.00" width="9.05" height="9.05" fill="#a8a8a8"/>
<rect x="12.95" y="311.10" width="9.05" height="9.05" fill="#e8e8e8"/>
<rect x="22.00" y="311.10" width="9.05" height="9.05" fill="#e8e8e8"/>
<rect x="31.05" y="311.10" width="9.05" height="9.05" fill="#e8e8e8"/>
<rect x="40.10" y="311.10" width="9.05" height="9.05" fill="#dcdcdc"/>
<rect x="49.15" y="311.10" width="9.05" height="9.05" fill="#ececec"/>
<rect x="58.20" y="311.10" width="9.05" height="9.05" fill="#ececec"/>
<rect x="67.25" y="311.10" width="9.05" height="9.05" fill="#ececec"/>
<rect x="76.30" y="311.10" width="9.05" height="9.05" fill="#e8e8e8"/>
<rect x="85.35" y="311.10" width="9.05" height="9.05" fill="#e4e4e4"/>
<rect x="3.90" y="338.00" width="9.05" height="9.05" fill="#e8e8e8"/>
<rect x="12.95" y="338.00" width="9.05" height="9.05" fill="#c0c0c0"/>
<rect x="22.00" y="338.00" width="9.05" height="9.05" fill="#dedede"/>
<rect x="31.05" y="338.00" width="9.05" height="9.05" fill="#dcdcdc"/>
<rect x="40.10" y="338.00" width="9.05" height="9.05" fill="#e0e0e0"/>
<rect x="49.15" y="338.00" width="9.05" height="9.05" fill="#f0f0f0"/>
<rect x="58.20" y="338.00" width="9.05" height="9.05" fill="#f0f0f0"/>
<rect x="67.25" y="338.00" width="9.05" height="9.05" fill="#c4c4c4"/>
<rect x="76.30" y="338.00" width="9.05" height="9.05" fill="#d4d4d4"/>
<rect x="85.35" y="338.00" width="9.05" height="9.05" fill="#c4c4c4"/>
<rect x="94.40" y="338.00" width="9.05" height="9.05" fill="#e4e4e4"/>
<rect x="103.45" y="338.00" width="9.05" height="9.05" fill="#e4e4e4"/>
<rect x="112.50" y="338.00" width="9.05" height="9.05" fill="#ececec"/>
<rect x="121.55" y="338.00" width="9.05" height="9.05" fill="#e4e4e4"/>
<rect x="130.60" y="338.00" width="9.05" height="9.05" fill="#e8e8e8"/>
<rect x="139.65" y="338.00" width="9.05" height="9.05" fill="#c0c0c0"/>
<rect x="148.70" y="338.00" width="9.05" height="9.05" fill="#ececec"/>
<rect x="3.90" y="347.00" width="9.05" height="9.05" fill="#e8e8e8"/>
<rect x="12.95" y="347.00" width="9.05" height="9.05" fill="#c0c0c0"/>
<rect x="22.00" y="347.00" width="9.05" height="9.05" fill="#d4d4d4"/>
<rect x="31.05" y="347.00" width="9.05" height="9.05" fill="#d4d4d4"/>
<rect x="40.10" y="347.00" width="9.05" height="9.05" fill="#d8d8d8"/>
<rect x="49.15" y="347.00" width="9.05" height="9.05" fill="#e0e0e0"/>
<rect x="58.20" y="347.00" width="9.05" height="9.05" fill="#e2e2e2"/>
<rect x="67.25" y="347.00" width="9.05" height="9.05" fill="#c0c0c0"/>
<rect x="76.30" y="347.00" width="9.05" height="9.05" fill="#e4e4e4"/>
<rect x="85.35" y="347.00" width="9.05" height="9.05" fill="#c4c4c4"/>
<rect x="94.40" y="347.00" width="9.05" height="9.05" fill="#c8c8c8"/>
<rect x="103.45" y="347.00" width="9.05" height="9.05" fill="#dedede"/>
<rect x="112.50" y="347.00" width="9.05" height="9.05" fill="#e6e6e6"/>
<rect x="121.55" y="347.00" width="9.05" height="9.05" fill="#d4d4d4"/>
<rect x="130.60" y="347.00" width="9.05" height="9.05" fill="#d8d8d8"/>
<rect x="139.65" y="347.00" width="9.05" height="9.05" fill="#bcbcbc"/>
<rect x="148.70" y="347.00" width="9.05" height="9.05" fill="#ececec"/>
<rect x="3.90" y="383.00" width="9.05" height="9.05" fill="#e0e0e0"/>
<rect x="12.95" y="383.00" width="9.05" height="9.05" fill="#909090"/>
<rect x="22.00" y="383.00" width="9.05" height="9.05" fill="#a0a0a0"/>
<rect x="31.05" y="383.00" width="9.05" height="9.05" fill="#c0c0c0"/>
<rect x="40.10" y="383.00" width="9.05" height="9.05" fill="#949494"/>
<rect x="49.15" y="383.00" width="9.05" height="9.05" fill="#c0c0c0"/>
<rect x="58.20" y="383.00" width="9.05" height="9.05" fill="#a0a0a0"/>
<rect x="67.25" y="383.00" width="9.05" height="9.05" fill="#a0a0a0"/>
<rect x="76.30" y="383.00" width="9.05" height="9.05" fill="#a0a0a0"/>
<rect x="85.35" y="383.00" width="9.05" height="9.05" fill="#8c8c8c"/>
<rect x="94.40" y="383.00" width="9.05" height="9.05" fill="#a0a0a0"/>
<rect x="103.45" y="383.00" width="9.05" height="9.05" fill="#b8b8b8"/>
<rect x="112.50" y="383.00" width="9.05" height="9.05" fill="#b8b8b8"/>
<rect x="3.90" y="391.90" width="9.05" height="9.05" fill="#f0f0f0"/>
<rect x="12.95" y="391.90" width="9.05" height="9.05" fill="#c8c8c8"/>
<rect x="22.00" y="391.90" width="9.05" height="9.05" fill="#ececec"/>
<rect x="31.05" y="391.90" width="9.05" height="9.05" fill="#e8e8e8"/>
<rect x="40.10" y="391.90" width="9.05" height="9.05" fill="#e8e8e8"/>
<rect x="49.15" y="391.90" width="9.05" height="9.05" fill="#e0e0e0"/>
<rect x="58.20" y="391.90" width="9.05" height="9.05" fill="#e0e0e0"/>
<rect x="67.25" y="391.90" width="9.05" height="9.05" fill="#e8e8e8"/>
<rect x="76.30" y="391.90" width="9.05" height="9.05" fill="#e0e0e0"/>
<rect x="85.35" y="391.90" width="9.05" height="9.05" fill="#e4e4e4"/>
<rect x="94.40" y="391.90" width="9.05" height="9.05" fill="#f0f0f0"/>
<rect x="103.45" y="391.90" width="9.05" height="9.05" fill="#dcdcdc"/>
<rect x="112.50" y="391.90" width="9.05" height="9.05" fill="#d8d8d8"/>
</svg><!--/MOSAIC-->
<div class="abs" style="left:1804px;top:721px;width:50px;height:49px;background:#fff;border:1px solid #e6e6e6;border-radius:4px;box-shadow:0 2px 4px rgba(0,0,0,.10)"></div>
<svg class="abs" style="left:1804px;top:721px" width="50" height="50" viewBox="0 0 50 50">
<path d="M25 6.800C27.500 8.500 29.500 10.800 30.300 13.400C32.800 12.300 35.600 11.900 38.500 12.200C39.800 16 39.900 21 38.500 25.500C36.500 31.500 31.500 35.300 25 35.300C18.500 35.300 13.500 31.500 11.500 25.500C10.100 21 10.200 16 11.500 12.200C14.400 11.900 17.200 12.300 19.700 13.400C20.500 10.800 22.500 8.500 25 6.800Z" fill="#e21f10"/>
<circle cx="20.100" cy="19.800" r="1.500" fill="#ffe9e4"/><circle cx="29.800" cy="19.800" r="1.500" fill="#ffe9e4"/>
<path d="M19.300 25.800C20.800 28.400 22.700 29.600 25 29.600S29.200 28.400 30.700 25.800" fill="none" stroke="#ffe9e4" stroke-width="1.600" stroke-linecap="round"/>
<path d="M25 34V43.300" stroke="#e21f10" stroke-width="2.400" stroke-linecap="round"/>
<path d="M11.300 37C15.800 37 19.300 38.800 21.600 42.200M38.700 37C34.200 37 30.700 38.800 28.400 42.200" fill="none" stroke="#d21c16" stroke-width="2.200" stroke-linecap="round"/>
</svg>
</body>
</html>
